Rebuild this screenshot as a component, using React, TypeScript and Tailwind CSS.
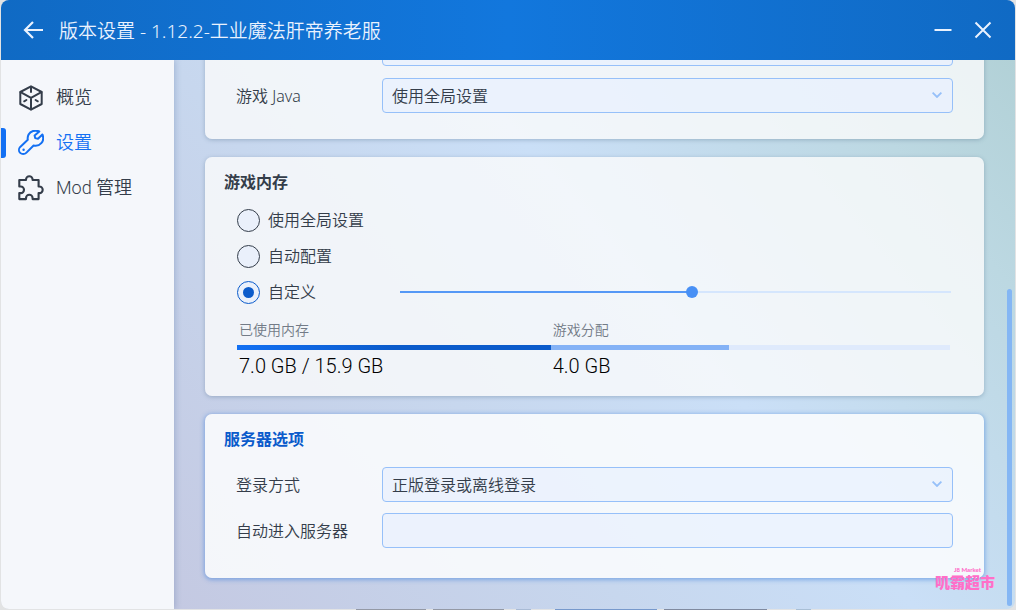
import { useState } from "react";
import type { ReactNode } from "react";

function CubeIcon() {
  return (
    <svg viewBox="0 0 26 26" className="size-[26px]" fill="none" stroke="currentColor" strokeWidth="2" strokeLinejoin="round" strokeLinecap="round">
      <path d="M13 1.3 23.7 7v12L13 24.7 2.3 19V7z" />
      <path d="M2.6 7.2 13 12.9l10.4-5.7M13 12.9v11.4M13 2v5M6.2 16.3l2.2-1.3M19.8 16.3l-2.2-1.3" />
    </svg>
  );
}

function WrenchIcon() {
  return (
    <svg viewBox="0 0 26 26" className="size-[26px]" fill="none" stroke="currentColor" strokeWidth="2" strokeLinejoin="round">
      <path d="M21.3 1.4C17-.3 12.5 1 10.6 4.5c-1 2-1.1 3.8-.8 5.3l-7.6 7.1c-1.6 1.6-1.6 4.4 0 6s4.4 1.6 6 0l7.4-7.4c2.7.6 5.7 0 7.7-2.3 2-2.4 2.3-5.9 1.1-8.7L20 8.8l-2.8-.7-.6-2.6z" />
      <circle cx="5.6" cy="19.7" r="1.2" fill="currentColor" stroke="none" />
    </svg>
  );
}

function PuzzleIcon() {
  return (
    <svg viewBox="0 0 26 26" className="size-[26px]" fill="none" stroke="currentColor" strokeWidth="2.1" strokeLinejoin="round">
      <path d="M1.3 5H8v-.5a3.3 3.3 0 0 1 6.6 0V5h6v6.5h.8a3.3 3.3 0 0 1 0 6.6h-.8v6h-6v-1a3.3 3.3 0 0 0-6.6 0v1H1.3v-6h1.4a3.3 3.3 0 0 0 0-6.6H1.3z" />
    </svg>
  );
}

function Chevron() {
  return (
    <svg viewBox="0 0 10 6" className="pointer-events-none absolute top-[14px] right-[11px] h-[6px] w-[10px]" fill="none" stroke="#96c0f9" strokeWidth="1.8">
      <path d="M.6.6 5 5 9.4.6" />
    </svg>
  );
}

const fieldClass =
  "h-[35px] w-full appearance-none rounded-[4px] border border-[#96c0f9] bg-[#e8f0fd]/75 px-[9px] text-base text-[#343d4a] outline-none";

function Row({ id, label, children }: { id: string; label: string; children: ReactNode }) {
  return (
    <div className="flex items-center">
      <label htmlFor={id} className="w-[146px] shrink-0 text-base">
        {label}
      </label>
      <div className="relative min-w-0 flex-1">{children}</div>
    </div>
  );
}

function SelectRow({ id, label, options }: { id: string; label: string; options: string[] }) {
  return (
    <Row id={id} label={label}>
      <select id={id} className={fieldClass + " block"}>
        {options.map((o) => (
          <option key={o}>{o}</option>
        ))}
      </select>
      <Chevron />
    </Row>
  );
}

const navItems = [
  { label: "概览", icon: <CubeIcon />, active: false },
  { label: "设置", icon: <WrenchIcon />, active: true },
  { label: "Mod 管理", icon: <PuzzleIcon />, active: false },
];

const modes = ["使用全局设置", "自动配置", "自定义"];

export default function App() {
  const [mode, setMode] = useState(2);
  const [memory, setMemory] = useState(53);

  return (
    <div className="flex h-screen flex-col bg-[#e2e3e4] px-px font-['Noto_Sans','Noto_Sans_CJK_SC',sans-serif] font-[350] text-[#343d4a]">
      <div className="relative flex min-h-0 flex-1 flex-col overflow-hidden rounded-lg">
        <header className="flex h-[60px] shrink-0 items-center bg-linear-to-r from-[#106ac4] via-[#1277dd] to-[#106ac4] pr-[23px] pl-[22px] text-[#eaf2fe]">
          <button type="button" aria-label="返回" className="mr-[14px]">
            <svg viewBox="0 0 22 22" className="size-[22px]" fill="none" stroke="currentColor" strokeWidth="2.2">
              <path d="M20 11H2.5M10 3 2 11l8 8" />
            </svg>
          </button>
          <h1 className="flex-1 pt-[2px] text-[19px]">版本设置 - 1.12.2-工业魔法肝帝养老服</h1>
          <button type="button" aria-label="最小化" className="mr-[22px]">
            <svg viewBox="0 0 18 18" className="size-[18px]" stroke="currentColor" strokeWidth="2">
              <path d="M.5 9h17" />
            </svg>
          </button>
          <button type="button" aria-label="关闭">
            <svg viewBox="0 0 18 18" className="size-[18px]" stroke="currentColor" strokeWidth="2">
              <path d="m1.5 1.5 15 15M16.5 1.5l-15 15" />
            </svg>
          </button>
        </header>

        <div className="flex min-h-0 flex-1 overflow-hidden">
          <nav className="z-10 w-[173px] shrink-0 bg-[#f5f7fb] pt-[15px] font-['Roboto','Noto_Sans_CJK_SC',sans-serif] shadow-[1px_0_6px_rgba(70,100,150,0.3)]">
            {navItems.map((item) => (
              <a
                key={item.label}
                href="#"
                className={
                  item.active ? "flex h-[45px] items-center text-lg text-[#1370f3]" : "flex h-[45px] items-center text-lg"
                }
              >
                <span
                  className={
                    item.active ? "mr-[12px] h-[30px] w-[5px] rounded-r-[3px] bg-[#1370f3]" : "mr-[12px] h-[30px] w-[5px]"
                  }
                />
                {item.icon}
                <span className="ml-[12px]">{item.label}</span>
              </a>
            ))}
          </nav>

          <main className="flex min-w-0 flex-1 bg-[linear-gradient(50deg,#c4c9e2_0%,#c7d7ee_35%,#cadff7_57%,#bcd8e2_85%,#b2d1d7_100%)] pr-[3px] pb-[3px] pl-[31px]">
            <div className="flex min-w-0 flex-1 flex-col gap-[18px]">
              <section className="-mt-[47px] flex shrink-0 flex-col gap-3 rounded-[7px] bg-[#fbfbfb]/80 px-[31px] pt-[18px] pb-[26px] shadow-[0_1px_4px_rgba(70,100,130,0.35)]">
                <input aria-label="窗口标题" className={fieldClass + " ml-[146px] !w-auto"} />
                <SelectRow id="java" label="游戏 Java" options={["使用全局设置"]} />
              </section>

              <section className="shrink-0 rounded-[7px] bg-[#fbfbfb]/80 px-[31px] pt-[13px] pb-[14px] shadow-[0_1px_4px_rgba(70,100,130,0.35)]">
                <h2 className="-ml-[12px] text-base font-bold">游戏内存</h2>
                <div className="mt-[8px] flex flex-col">
                  {modes.map((m, i) => (
                    <div key={m} className="flex h-[36px] items-center">
                      <label className="flex w-[164px] shrink-0 items-center gap-2 pl-px">
                        <input
                          type="radio"
                          name="memory-mode"
                          checked={mode === i}
                          onChange={() => setMode(i)}
                          className="grid size-[23px] shrink-0 appearance-none place-items-center rounded-full border-[1.5px] border-[#343d4a] bg-[#eaf0fb] checked:border-[#0b5bcb] checked:before:size-[11px] checked:before:rounded-full checked:before:bg-[#0b5bcb]"
                        />
                        {m}
                      </label>
                      {i === 2 && (
                        <input
                          type="range"
                          aria-label="自定义"
                          min={0}
                          max={100}
                          value={memory}
                          onChange={(e) => setMemory(Number(e.target.value))}
                          className="mr-[2px] h-[12px] min-w-0 flex-1 appearance-none bg-[length:100%_2px] bg-center bg-no-repeat [&::-webkit-slider-thumb]:size-[12px] [&::-webkit-slider-thumb]:appearance-none [&::-webkit-slider-thumb]:rounded-full [&::-webkit-slider-thumb]:bg-[#4890f5]"
                          style={{
                            backgroundImage: `linear-gradient(to right, #5598f6 ${memory}%, #d5e6fd ${memory}%)`,
                          }}
                        />
                      )}
                    </div>
                  ))}
                </div>
                <div className="mr-[3px] ml-px">
                  <div className="mt-[10px] grid grid-cols-[44fr_56fr] text-sm text-[#737b87]">
                    <span className="pl-[2px]">已使用内存</span>
                    <span className="pl-[2px]">游戏分配</span>
                  </div>
                  <div className="mt-[5px] grid h-[5px] grid-cols-[44fr_25fr_31fr]">
                    <div className="bg-linear-to-r from-[#1370f3] to-[#0b5bcb] to-50%" />
                    <div className="bg-[#84b2f6]" />
                    <div className="bg-[#dfeafc]" />
                  </div>
                  <div className="grid grid-cols-[44fr_56fr] font-['Roboto'] text-xl leading-8 text-black">
                    <span className="pl-[2px]">7.0 GB / 15.9 GB</span>
                    <span className="pl-[2px]">4.0 GB</span>
                  </div>
                </div>
              </section>

              <section className="shrink-0 rounded-[7px] bg-[#fdfefe]/85 px-[31px] pt-[13px] pb-[30px] shadow-[0_1px_4px_1px_rgba(60,125,220,0.5)]">
                <h2 className="-ml-[12px] text-base font-bold text-[#0b5bcb]">服务器选项</h2>
                <div className="mt-[16px] flex flex-col gap-[11px]">
                  <SelectRow id="login" label="登录方式" options={["正版登录或离线登录"]} />
                  <Row id="server" label="自动进入服务器">
                    <input id="server" className={fieldClass + " block"} />
                  </Row>
                </div>
              </section>
            </div>
            <div className="ml-[23px] flex w-[5px] shrink-0 flex-col justify-end">
              <div className="h-[58%] rounded-full bg-[#84b6f4]" />
            </div>
          </main>
        </div>

        <div className="pointer-events-none absolute right-[20px] bottom-[18px] z-20 flex flex-col items-end text-[#ff6fc8]">
          <span className="mr-[14px] font-['Lato'] text-[6px] leading-[8px] font-black">J8 Market</span>
          <span className="text-[15px] leading-[17px] font-black">叽霸超市</span>
        </div>
      </div>
      <div className="flex h-px shrink-0 gap-[7px] pl-[355px]">
        <div className="w-[70px] bg-[#9499a5]" />
        <div className="w-[71px] bg-[#9499a5]" />
        <div className="ml-[5px] w-[15px] bg-[#a9bbd5]" />
        <div className="ml-[17px] w-[102px] bg-[#7799cc]" />
        <div className="w-[103px] bg-[#808a9f]" />
        <div className="ml-[22px] w-[15px] bg-[#a9bfd5]" />
      </div>
    </div>
  );
}
